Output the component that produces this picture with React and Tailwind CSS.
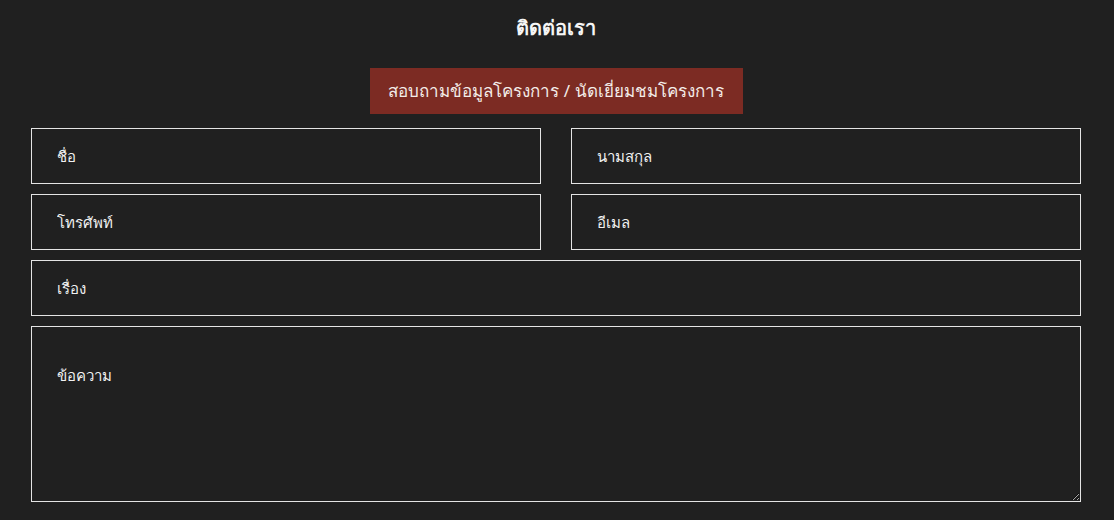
import React from 'react';

const inputCls =
  "w-full h-[56px] bg-transparent border border-[#e4e4e4] px-[25px] text-[15px] text-white placeholder:text-[#f0f0f0] focus:outline-none";

export default function App() {
  return (
    <div className="min-h-[520px] bg-[#202020] font-['Noto_Sans',sans-serif] text-white">
      <div className="ml-[31px] w-[1050px]">
        {/* Header */}
        <div className="flex flex-col items-center pt-[13px]">
          <h1 className="text-[20px] font-bold leading-[30px] text-[#f5f5f5]">ติดต่อเรา</h1>
          <div className="mt-[25px] h-[46px] w-[373px] bg-[#7c2b23] flex items-center justify-center text-[17px] text-[#f3ece8]">
            สอบถามข้อมูลโครงการ / นัดเยี่ยมชมโครงการ
          </div>
        </div>

        {/* Form */}
        <form className="mt-[14px] flex flex-col gap-[10px]">
          <div className="grid grid-cols-2 gap-[30px]">
            <input className={inputCls} placeholder="ชื่อ" />
            <input className={inputCls} placeholder="นามสกุล" />
          </div>
          <div className="grid grid-cols-2 gap-[30px]">
            <input className={inputCls} placeholder="โทรศัพท์" />
            <input className={inputCls} placeholder="อีเมล" />
          </div>
          <input className={inputCls} placeholder="เรื่อง" />
          <textarea
            className="block w-full h-[176px] bg-transparent border border-[#e4e4e4] px-[25px] pt-[37px] text-[15px] text-white placeholder:text-[#f0f0f0] focus:outline-none"
            placeholder="ข้อความ"
          />
        </form>
      </div>
    </div>
  );
}
